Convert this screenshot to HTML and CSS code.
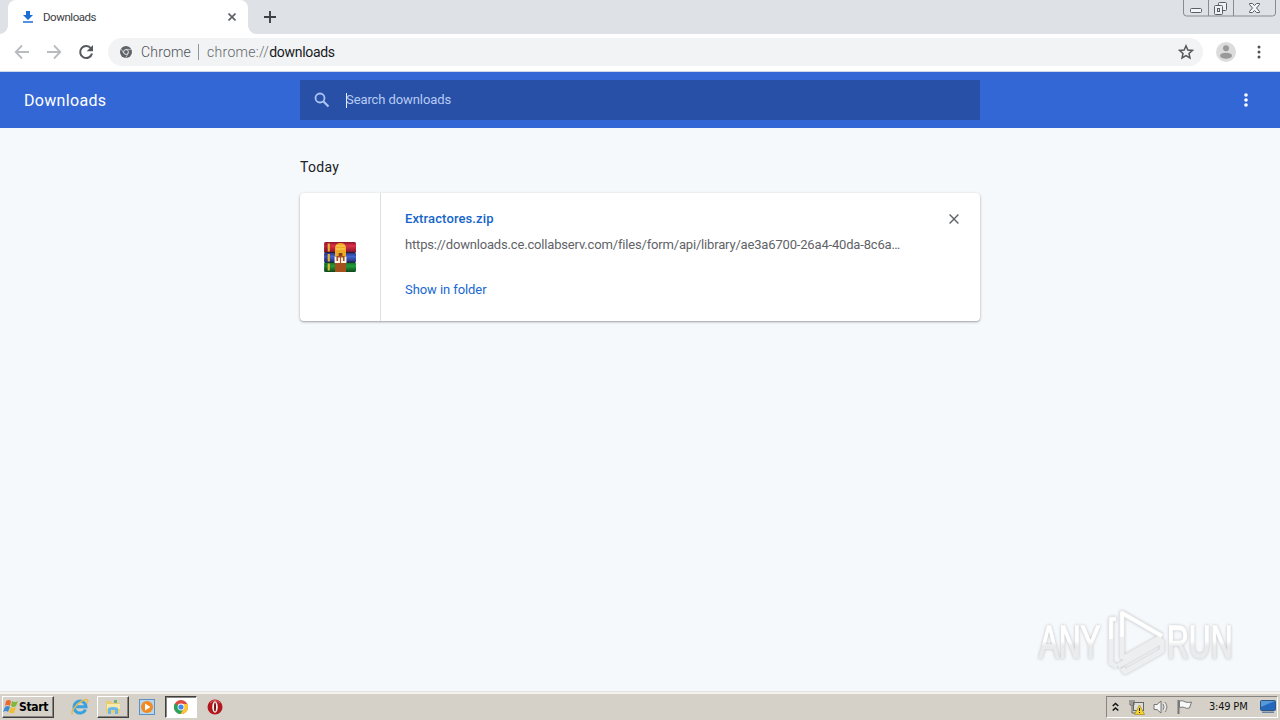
FILE: index.html
```
<!DOCTYPE html>
<html lang="en">
<head>
<meta charset="utf-8">
<title>Downloads</title>
<link rel="stylesheet" href="styles.css">
</head>
<body>
<div class="screen">
  <div class="tabstrip">
    <div class="tab">
      <svg class="tab-icon" width="12" height="12" viewBox="0 0 12 12"><path d="M4 0h4v4h3L6 9 1 4h3zM1 10.2h10v1.6H1z" fill="#1a6fd6"/></svg>
      <span class="tab-title">Downloads</span>
      <svg class="tab-close" width="8" height="8" viewBox="0 0 8 8"><path d="M.5.5l7 7m0-7l-7 7" stroke="#5f6368" stroke-width="1.7"/></svg>
    </div>
    <svg class="newtab" width="12" height="12" viewBox="0 0 12 12"><path d="M6 0v12M0 6h12" stroke="#3c4043" stroke-width="1.9"/></svg>
    <svg class="window-buttons" width="94" height="18" viewBox="0 0 94 18">
      <path d="M.5 0v13q0 3 3 3h86q3 0 3-3V0M25.500 0v16M50.500 0v16" fill="none" stroke="#888b91"/>
      <rect x="7.500" y="8.500" width="11" height="4" rx="1" fill="#f4f5f6" stroke="#5b5e66"/>
      <rect x="35.500" y="2.500" width="8" height="8" rx="1" fill="#f0f1f2" stroke="#5b5e66"/>
      <rect x="31.500" y="5.500" width="8" height="9" rx="1" fill="#f0f1f2" stroke="#5b5e66"/>
      <rect x="34.500" y="8.500" width="2" height="3" fill="#dee1e6" stroke="#5b5e66"/>
      <path d="M66.500 3.500h3l2 2 2-2h3v1l-3 3.500 3 3.500v1h-3l-2-2-2 2h-3v-1l3-3.500-3-3.500z" fill="#f4f5f6" stroke="#5b5e66"/>
    </svg>
  </div>

  <div class="toolbar">
    <svg class="nav back" width="16" height="16" viewBox="0 0 16 16"><path d="M15 8H2M8 1.500L1.700 8 8 14.500" fill="none" stroke="#b9bbbe" stroke-width="1.800"/></svg>
    <svg class="nav forward" width="16" height="16" viewBox="0 0 16 16"><path d="M1 8h13M8 1.500L14.300 8 8 14.500" fill="none" stroke="#b9bbbe" stroke-width="1.800"/></svg>
    <svg class="nav reload" width="16" height="16" viewBox="0 0 16 16"><path d="M13 4.500A6 6 0 1 0 14 9.500" fill="none" stroke="#55585c" stroke-width="2"/><path d="M15 1v6.300H8.700z" fill="#55585c"/></svg>
    <div class="omnibox">
      <svg class="site-icon" width="12" height="12" viewBox="0 0 12 12"><circle cx="6" cy="6" r="6" fill="#5f6368"/><circle cx="6" cy="6" r="2.400" fill="#5f6368" stroke="#f1f3f4" stroke-width=".9"/><path d="M6 3.400h5.300M3.700 7.200L1.200 3M8.300 7.200L5.800 11.700" stroke="#f1f3f4" stroke-width=".6"/></svg>
      <span class="site-name">Chrome</span>
      <span class="divider"></span>
      <span class="url">chrome://<span class="host">downloads</span></span>
      <svg class="star" width="16" height="16" viewBox="0 0 16 16"><path d="M8 1.800l1.850 4.150 4.550.45-3.400 3.050.95 4.450L8 11.600l-3.950 2.300L5 9.450 1.600 6.400l4.550-.45z" fill="none" stroke="#55585c" stroke-width="1.500"/></svg>
    </div>
    <svg class="avatar" width="20" height="20" viewBox="0 0 20 20"><circle cx="10" cy="10" r="10" fill="#dcdcdc"/><circle cx="10" cy="6.300" r="3" fill="#999"/><ellipse cx="10" cy="13.700" rx="6" ry="3" fill="#999"/></svg>
    <svg class="menu" width="4" height="14" viewBox="0 0 4 14"><g fill="#505357"><circle cx="2" cy="2" r="1.500"/><circle cx="2" cy="7" r="1.500"/><circle cx="2" cy="12" r="1.500"/></g></svg>
  </div>

  <header class="header">
    <h1 class="page-title">Downloads</h1>
    <div class="search">
      <svg class="search-icon" width="16" height="16" viewBox="0 0 16 16"><circle cx="6" cy="6" r="4.500" fill="none" stroke="#a9c4f5" stroke-width="1.800"/><path d="M9.500 9.500l5 5" stroke="#a9c4f5" stroke-width="2.200"/></svg>
      <span class="caret"></span><span class="placeholder">Search downloads</span>
    </div>
    <svg class="more" width="4" height="14" viewBox="0 0 4 14"><g fill="#fff"><circle cx="2" cy="2" r="1.800"/><circle cx="2" cy="7" r="1.800"/><circle cx="2" cy="12" r="1.800"/></g></svg>
  </header>

  <main class="content">
    <h2 class="date">Today</h2>
    <section class="card">
      <div class="file-icon">
        <svg width="32" height="30" viewBox="0 0 32 30">
          <defs>
            <linearGradient id="r" x2="0" y2="1"><stop stop-color="#8d1430"/><stop offset=".35" stop-color="#dc3148"/><stop offset="1" stop-color="#7a1028"/></linearGradient>
            <linearGradient id="b" x2="0" y2="1"><stop stop-color="#26347e"/><stop offset=".4" stop-color="#4262cc"/><stop offset="1" stop-color="#202b70"/></linearGradient>
            <linearGradient id="g" x2="0" y2="1"><stop stop-color="#106a29"/><stop offset=".4" stop-color="#249c3b"/><stop offset="1" stop-color="#0c471b"/></linearGradient>
          </defs>
          <rect width="32" height="11" rx="1.500" fill="url(#r)"/>
          <rect y="10.500" width="32" height="10" rx="1.500" fill="url(#b)"/>
          <rect y="20" width="32" height="10" rx="1.500" fill="url(#g)"/>
          <path d="M1 10.500h30M1 20.300h30" stroke="#251d36"/>
          <path d="M4.800 1.500v8M4.800 12v7.500M4.800 21.500v7" stroke="#e8b72c" stroke-width="2"/>
          <path d="M2 2v7M2 12v7M2 22v6" stroke="#381e30" stroke-width=".7"/>
          <rect x="11" y="14" width="11" height="16" fill="#a6511d"/>
          <path d="M11 14V5q1-4 5.500-4T22 5v9z" fill="#efa927"/>
          <path d="M12 4h9M12 7h9" stroke="#ffd65c"/>
          <rect x="14.500" y="11" width="4" height="3" rx="1" fill="#834014"/>
          <path d="M11.500 14.500V20H15v-4.500M21.500 14.500V20H18v-4.500" fill="none" stroke="#fff4e8" stroke-width="1.900"/>
        </svg>
      </div>
      <div class="details">
        <div class="name">Extractores.zip</div>
        <div class="source">https://downloads.ce.collabserv.com/files/form/api/library/ae3a6700-26a4-40da-8c6a…</div>
        <div class="action">Show in folder</div>
      </div>
      <svg class="remove" width="10" height="10" viewBox="0 0 10 10"><path d="M.6.6l8.800 8.800m0-8.800L.6 9.400" stroke="#5f6368" stroke-width="1.400"/></svg>
    </section>
    <svg class="watermark" width="210" height="72" viewBox="0 0 210 72">
      <defs><linearGradient id="wm" x2="0" y2="1"><stop offset=".48" stop-color="#fff"/><stop offset=".58" stop-color="#eaebec"/></linearGradient></defs>
      <g fill="url(#wm)" stroke="url(#wm)" stroke-width="1.500" font-family="Liberation Sans" font-size="46" class="wm-letters">
        <text transform="translate(9 53) scale(.655 1)" textLength="94" lengthAdjust="spacingAndGlyphs">ANY</text>
        <text transform="translate(137 53) scale(.655 1)" textLength="100" lengthAdjust="spacingAndGlyphs">RUN</text>
      </g>
      <g fill="none" stroke="#eceeef" stroke-width="5" stroke-linejoin="round" class="wm-logo">
        <path d="M86 14h-5v44l6 4M92 54V8l40 23M92 54l39-22M92 63l3 4 37-21V36L88 61"/>
        <path d="M92 32V8l40 23M86 14h-5v20" stroke="#fff" stroke-width="3.500"/>
      </g>
    </svg>
  </main>

  <footer class="taskbar">
    <div class="start">
      <svg width="16" height="16" viewBox="0 0 16 16"><path d="M3 2q3-2 5 0L7 7Q4 5 2 7z" fill="#ed6731"/><path d="M9 2q3 2 6 0l-2 5q-3 2-5 0z" fill="#80b83c"/><path d="M2 8q3-2 5 0l-2 5q-2-2-5 0z" fill="#3d8cd2"/><path d="M8 8q2 2 5 0l-2 6q-3 1-5-1z" fill="#f1be31"/></svg>
      <span>Start</span>
    </div>
    <svg class="ie" width="18" height="18" viewBox="0 0 18 18"><path d="M14.500 11.500A6 6 0 1 1 15 8.800H5" fill="none" stroke="#3ba2df" stroke-width="3"/><path d="M1.500 16.500C-1 13 8 3 15 1.500q3 0 1 4" fill="none" stroke="#e6b94a" stroke-width="1.400"/></svg>
    <div class="task raised">
      <svg width="16" height="16" viewBox="0 0 16 16"><path d="M1 2h5l1 2h8v10H1z" fill="#e8cd72"/><path d="M2 5h13v5H2z" fill="#f8eaac"/><path d="M3 15V9q5-2 10 0v6h-3v-4H6v4z" fill="#68b9e8"/><path d="M9 1h3v3H9z" fill="#74b670"/></svg>
    </div>
    <svg class="wmp" width="16" height="16" viewBox="0 0 16 16"><rect x=".5" y=".5" width="15" height="15" fill="#b8d5ee" stroke="#5b91c4"/><circle cx="8" cy="8" r="6" fill="#f18a21"/><path d="M6 4.500v7L11.500 8z" fill="#fff"/></svg>
    <div class="task pressed">
      <svg width="14" height="14" viewBox="0 0 14 14"><circle cx="7" cy="7" r="7" fill="#dc4b3f"/><path d="M7 7L.9 3.500A7 7 0 0 0 6.500 14L10 8z" fill="#29a35a"/><path d="M7 4h6.300A7 7 0 0 1 6.500 14L9.800 8.500z" fill="#fbc62e"/><circle cx="7" cy="7" r="3.400" fill="#fff"/><circle cx="7" cy="7" r="2.600" fill="#4687e8"/></svg>
    </div>
    <svg class="opera" width="16" height="16" viewBox="0 0 16 16"><circle cx="8" cy="8" r="7.500" fill="#b3171c"/><path d="M3 4q5-5 10 0" fill="none" stroke="#de6768"/><ellipse cx="8" cy="8" rx="2.800" ry="5.800" fill="#f4f4f4"/><ellipse cx="8" cy="8" rx="1" ry="4.500" fill="#761014"/></svg>
    <div class="tray">
      <svg class="chevrons" width="7" height="10" viewBox="0 0 7 10"><path d="M.7 4l2.800-2.500L6.300 4M.7 8.500L3.500 6l2.800 2.500" fill="none" stroke="#111" stroke-width="1.500"/></svg>
      <svg class="network" width="16" height="16" viewBox="0 0 16 16"><rect x="4.500" y="3.500" width="10" height="8" fill="#deded9" stroke="#666"/><path d="M1 1v5h4V1M3 1v4m0 1v8h4" fill="none" stroke="#666"/><path d="M10.500 6l5 9.500h-10z" fill="#f4d432" stroke="#a58b18" stroke-width=".7"/><path d="M10.500 9v3m0 1v1" stroke="#222"/></svg>
      <svg class="sound" width="16" height="16" viewBox="0 0 16 16"><path d="M1 5.500h3L8 2v12l-4-3.500H1z" fill="#f5f5f5" stroke="#777"/><path d="M10 5q2 3 0 6M12 3q4 5 0 10" fill="none" stroke="#858585"/><path d="M11 4q3 4 0 8" fill="none" stroke="#f3f3f3"/></svg>
      <svg class="flag" width="16" height="16" viewBox="0 0 16 16"><path d="M1.500 1v14" stroke="#777" stroke-width="2"/><path d="M2.500 2q3-1 6 1 3 1 6 0l-2 6q-3 1-5-.5-2-.8-5 0z" fill="#f7f7f5" stroke="#777"/></svg>
      <time class="clock">3:49 PM</time>
      <svg class="desktop" width="16" height="14" viewBox="0 0 16 14"><rect x=".5" y=".5" width="15" height="10" rx="1" fill="#2468bd" stroke="#315680"/><path d="M1 1h14L1 7z" fill="#5597da"/><path d="M2 11.500h12v1.500H2z" fill="#6883a1"/></svg>
    </div>
  </footer>
</div>
</body>
</html>
```

FILE: styles.css
```
* { box-sizing: border-box; }
body { margin: 0; font-family: Roboto, "Liberation Sans", sans-serif; }
svg { display: block; flex: none; }
.screen { width: 1280px; height: 720px; display: flex; flex-direction: column; overflow: hidden; background: #f6f9fc; }

.tabstrip { height: 34px; flex: none; display: flex; background: #dee1e6; }
.tab { width: 240px; height: 34px; margin-left: 8px; padding: 0 12px 0 14px; display: flex; align-items: center; background: #fff; border-radius: 8px 8px 0 0; position: relative; }
.tab::before, .tab::after { content: ""; position: absolute; bottom: 0; width: 8px; height: 8px; }
.tab::before { left: -8px; background: radial-gradient(circle at 0 0, #dee1e6 7.5px, #fff 8px); }
.tab::after { right: -8px; background: radial-gradient(circle at 100% 0, #dee1e6 7.5px, #fff 8px); }
.tab-title { margin-left: 9px; font-size: 11.5px; line-height: 16px; letter-spacing: -.45px; color: #3c4043; }
.tab-close { margin-left: auto; }
.newtab { margin: 11px 0 0 16px; }
.window-buttons { margin-left: auto; margin-right: 3px; }

.toolbar { height: 38px; flex: none; padding-bottom: 1px; display: flex; align-items: center; background: #fff; border-bottom: 1px solid #cfd9ed; }
.back { margin-left: 14px; }
.forward { margin-left: 16px; }
.reload { margin-left: 16px; }
.omnibox { width: 1095px; height: 28px; margin-left: 14px; padding: 0 9px 0 12px; border-radius: 14px; background: #f1f3f4; display: flex; align-items: center; font-size: 14px; line-height: 20px; color: #63676b; font-weight: 300; }
.site-name { width: 50px; margin-left: 9px; letter-spacing: .2px; color: #4d5054; }
.divider { width: 1px; height: 16px; margin: 0 8px 0 7px; background: #94979b; }
.url { letter-spacing: .3px; white-space: nowrap; }
.host { color: #171a1d; font-weight: 400; letter-spacing: -.3px; }
.star { margin-left: auto; }
.avatar { margin-left: 13px; }
.menu { margin-left: 21px; }

.header { height: 56px; flex: none; display: flex; align-items: center; background: #3367d6; color: #fff; }
.page-title { width: 276px; margin: 0 0 0 24px; padding-top: 2px; font-size: 16px; line-height: 20px; font-weight: 400; letter-spacing: .32px; }
.search { width: 680px; height: 40px; padding-left: 14px; display: flex; align-items: center; background: #2950a7; }
.caret { width: 1px; height: 15px; margin-left: 16px; background: #e5eeff; }
.placeholder { margin-left: -1px; font-size: 13px; line-height: 18px; letter-spacing: -.09px; color: #b7cbf4; }
.more { margin-left: 264px; }

.content { flex: 1; min-height: 0; position: relative; }
.date { width: 680px; margin: 30px auto 16px; font-size: 14px; line-height: 19px; font-weight: 400; letter-spacing: .3px; color: #202124; }
.card { width: 680px; height: 128px; margin: 0 auto; display: flex; background: #fff; border-radius: 4px; box-shadow: 0 1px 2px rgba(60,64,67,.4), 0 1px 3px 1px rgba(60,64,67,.08); }
.file-icon { width: 81px; border-right: 1px solid #dcdee0; display: flex; align-items: center; justify-content: center; }
.details { width: 520px; padding: 17px 0 0 24px; font-size: 13px; line-height: 18px; white-space: nowrap; }
.name { color: #1565c9; font-weight: 500; letter-spacing: .12px; }
.source { margin-top: 8px; color: #5f6368; letter-spacing: -.173px; }
.action { margin-top: 27px; color: #1967d2; letter-spacing: -.08px; }
.remove { margin: 21px 0 0 48px; }
.watermark { position: absolute; left: 1030px; top: 477px; }
.wm-letters, .wm-logo { filter: drop-shadow(0 0 1.5px #bcbec0); }

.taskbar { height: 28px; flex: none; padding: 2px 2px 2px 2px; display: flex; align-items: center; background: #d5d0c8; border-top: 2px solid #f4f2ed; box-shadow: 0 -1px #e4e3df; }
.start { width: 52px; height: 22px; display: flex; align-items: center; border: 1px solid; border-color: #fff #404040 #404040 #fff; box-shadow: inset -1px -1px #888580; font: bold 12px "DejaVu Sans Condensed", "DejaVu Sans", sans-serif; letter-spacing: -.35px; color: #000; }
.ie { margin-left: 17px; }
.task { width: 32px; height: 22px; display: flex; align-items: center; justify-content: center; }
.raised { margin-left: 8px; border: 1px solid; border-color: #fff #404040 #404040 #fff; box-shadow: inset -1px -1px #888580; }
.wmp { margin-left: 10px; }
.pressed { margin-left: 10px; background: #fff; border: 1px solid; border-color: #404040 #fff #fff #404040; box-shadow: inset 1px 1px #888580; }
.opera { margin-left: 10px; }
.tray { width: 172px; height: 22px; margin-left: auto; padding: 0 1px 0 5px; display: flex; align-items: center; border: 1px solid; border-color: #888580 #fff #fff #888580; }
.network { margin-left: 10px; }
.sound { margin-left: 8px; }
.flag { margin-left: 8px; }
.clock { width: 41px; margin-left: 16px; font: 11px/16px "DejaVu Sans Condensed", sans-serif; letter-spacing: -.2px; white-space: nowrap; color: #111; }
.desktop { margin-left: auto; }
```
